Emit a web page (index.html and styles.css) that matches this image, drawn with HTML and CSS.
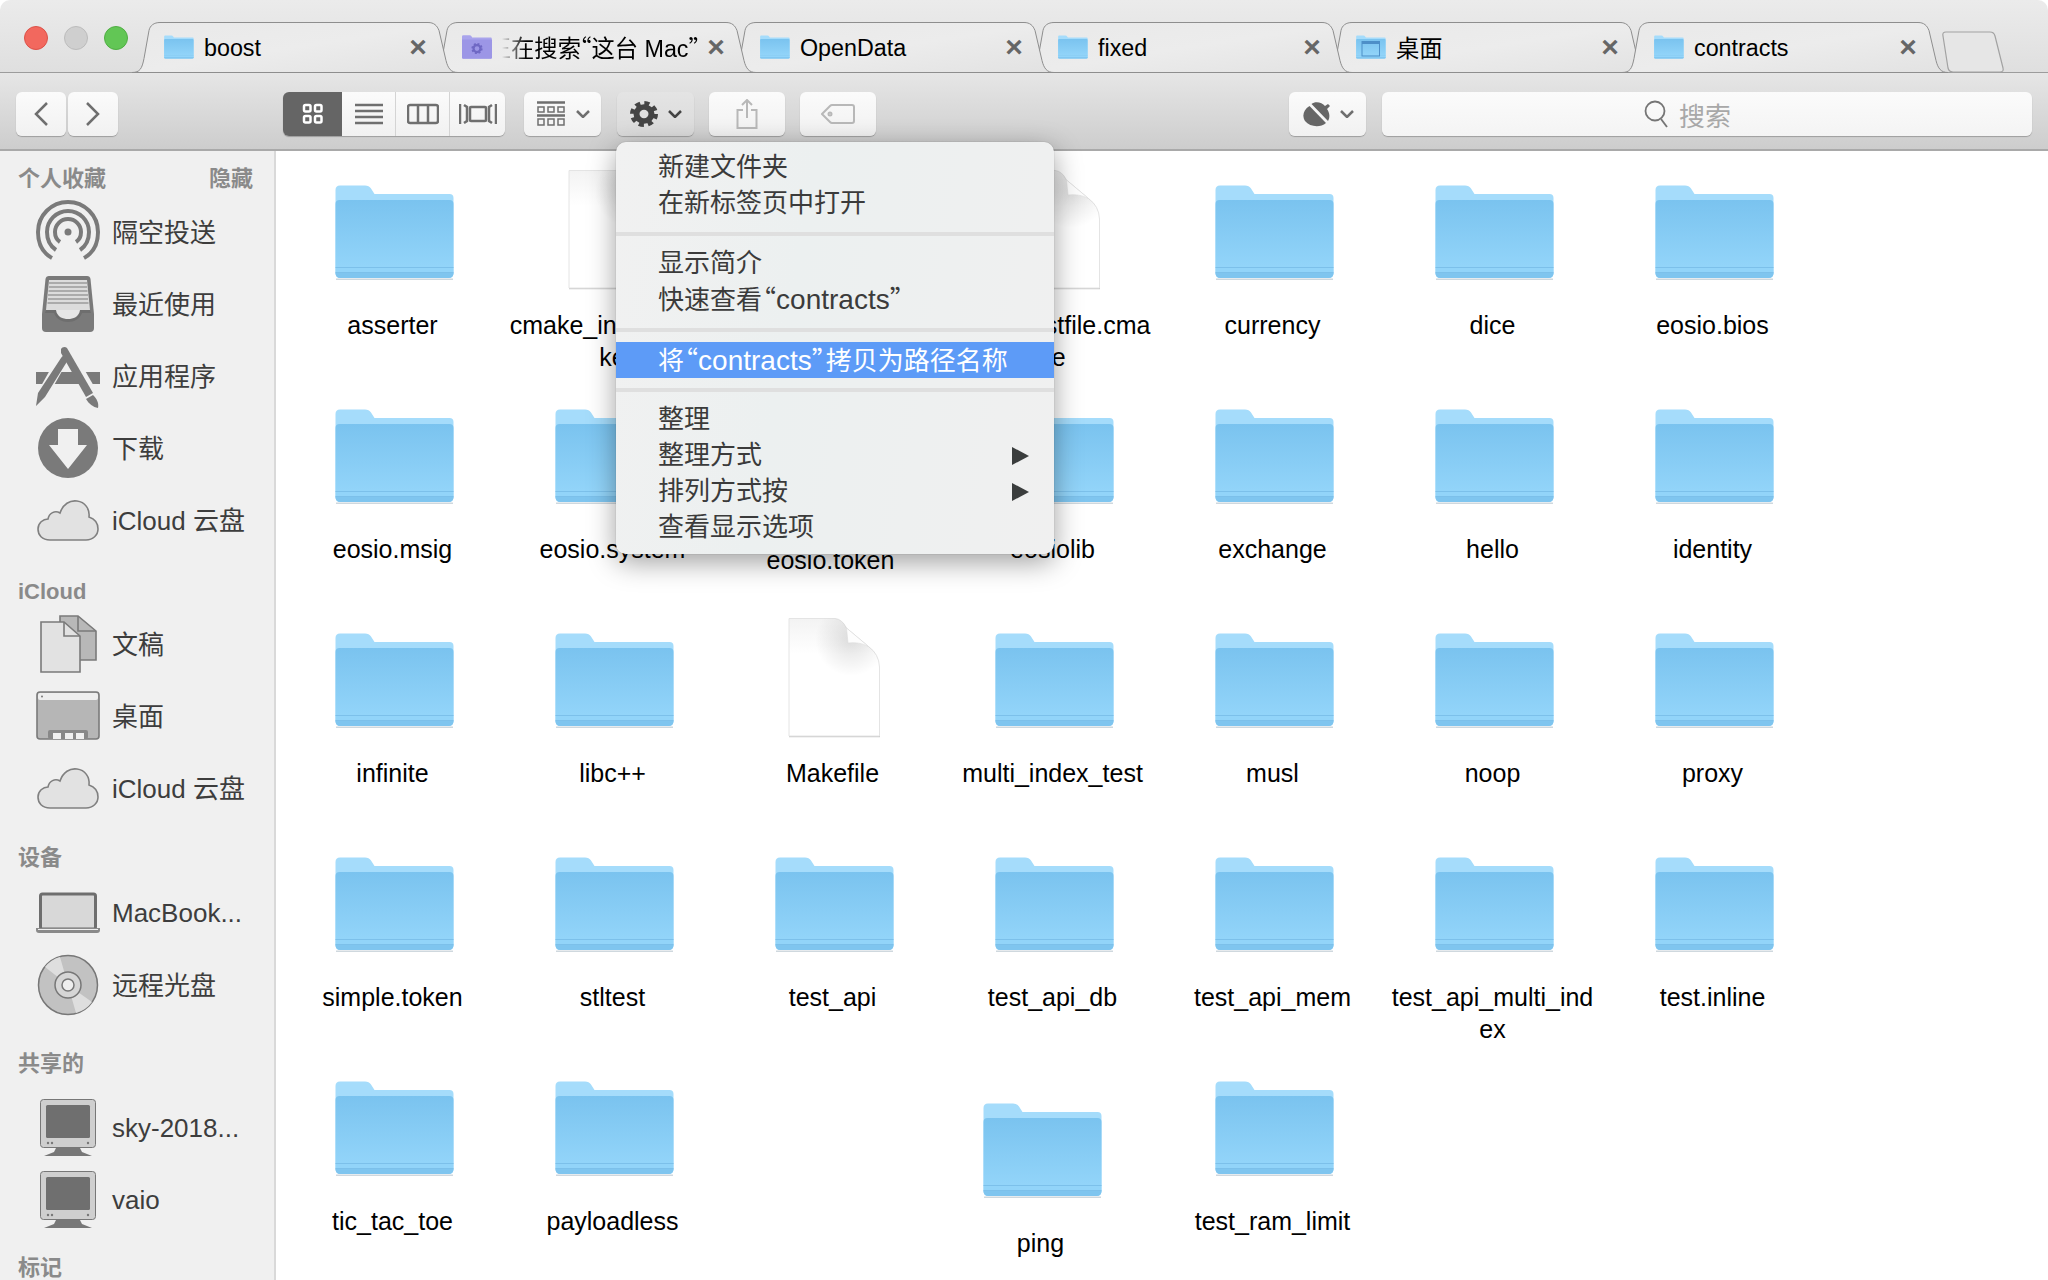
FILE: index.html
```html
<!DOCTYPE html>
<html lang="zh-CN">
<head>
    <meta charset="UTF-8">
    <meta name="viewport" content="width=device-width, initial-scale=1.0">
    <title>contracts</title>
    <link rel="stylesheet" href="styles.css">
</head>
<body>
    <svg class="defs" width="0" height="0">
        <defs>
            <linearGradient id="folderFront" x1="0" y1="0" x2="0" y2="1">
                <stop offset="0" stop-color="#7ac3ef"/>
                <stop offset="0.85" stop-color="#92d4f9"/>
            </linearGradient>
            <linearGradient id="tabFill" x1="0" y1="0" x2="1" y2="1">
                <stop offset="0" stop-color="#e9e9e9"/>
                <stop offset="0.5" stop-color="#ececec"/>
                <stop offset="1" stop-color="#e2e2e2"/>
            </linearGradient>
            <linearGradient id="fileTop" x1="0" y1="0" x2="0" y2="1">
                <stop offset="0" stop-color="#f3f3f3"/>
                <stop offset="0.3" stop-color="#ffffff"/>
            </linearGradient>
            <radialGradient id="fileCurl" gradientUnits="userSpaceOnUse" cx="82" cy="24" r="36">
                <stop offset="0" stop-color="#000" stop-opacity="0.12"/>
                <stop offset="1" stop-color="#000" stop-opacity="0"/>
            </radialGradient>
            <g id="folder">
                <path d="M7 110.500h117v1.500H7Z" fill="#cfd8de"/>
                <path d="M6.500 22q0-4.500 4.500-4.500h25q4 0 6 3l3.500 5.500h75q4 0 4 4v74q0 5-5 5H11.500q-5 0-5-5Z" fill="#a5dcfb"/>
                <path d="M6.500 36q0-4 4-4h110q4 0 4 4v69q0 5-5 5H11.500q-5 0-5-5Z" fill="url(#folderFront)"/>
                <path d="M6.500 99h118v1H6.500zM6.500 104h118v1H6.500z" fill="#7cc0ea"/>
                <path d="M6.500 105h118q0 5-5 5H11.500q-5 0-5-5Z" fill="#7fc5ef"/>
            </g>
            <g id="file">
                <path d="M20 120.500h91" stroke="#c9c9c9" stroke-width="1.500"/>
                <path d="M20 2.500H66q7 .5 11.500 9.500L99.500 30.500Q110 38 110.500 51V120H20Z" fill="url(#fileTop)" stroke="#e4e4e4"/>
                <path d="M20 2.500H66q7 .5 11.500 9.500L99.500 30.500Q110 38 110.500 51V120H20Z" fill="url(#fileCurl)"/>
                <path d="M77.500 12 79 27q11-1.500 20.500 3.500Z" fill="#fdfdfd" stroke="#dcdcdc" stroke-width=".6"/>
            </g>
            <g id="cloud">
                <path d="M14 52C6 52 2 47 2 41c0-6 5-10 10-10 1-6 7-9 12-6 3-9 10-13 17-12 8 1 13 8 12 16 6 2 9 7 9 12 0 6-5 11-12 11Z" fill="#e2e2e2" stroke="#808080" stroke-width="1.600"/>
            </g>
            <g id="monitor">
                <path d="M20 52h24l2 4 10 4H8l10-4Z" fill="#777"/>
                <rect x="4.500" y="3.500" width="55" height="48" rx="3" fill="#cfcfcf" stroke="#777"/>
                <rect x="10" y="9" width="44" height="33" rx="1.500" fill="#6f6f6f"/>
                <circle cx="12" cy="47" r="1.200" fill="#777"/><circle cx="16" cy="47" r="1.200" fill="#777"/><circle cx="52" cy="47" r="1.200" fill="#777"/>
            </g>
        </defs>
    </svg>

    <div class="window">
        <div class="tabbar">
            <svg class="tab-shapes" viewBox="0 0 2048 51" width="2048" height="51">
                <defs>
                    <path id="tabShape" d="M-20 50C-12 50-10 46-8 36L-3 8C-2 3 2 0 8 0H276C282 0 285 3 287 8L294 38C296 46 299 50 306 50Z" fill="url(#tabFill)" stroke="#8e8e8e"/>
                </defs>
                <use href="#tabShape" x="1344" y="0.500"/>
                <use href="#tabShape" x="1046" y="0.500"/>
                <use href="#tabShape" x="748" y="0.500"/>
                <use href="#tabShape" x="450" y="0.500"/>
                <use href="#tabShape" x="152" y="0.500"/>
                <use href="#tabShape" x="1642" y="0.500"/>
                <path d="M1943 14q-1-4 3-4h44q4 0 5 4l8 32q1 4-3 4h-47q-4 0-5-4Z" fill="#e6e6e6" stroke="#a2a2a2" stroke-width="1.200"/>
            </svg>
            <div class="lights">
                <span class="light light-red"></span>
                <span class="light light-grey"></span>
                <span class="light light-green"></span>
            </div>
            <div class="tab">
                <svg class="tab-icon" viewBox="6 16 120 96"><use href="#folder"/></svg>
                <span class="tab-label">boost</span>
                <span class="tab-close">×</span>
            </div>
            <div class="tab">
                <svg class="tab-icon" viewBox="6 16 120 96">
                    <path d="M6 22q0-5 5-5h26q4 0 6 3l4 6h74q4 0 4 4v75q0 5-5 5H11q-5 0-5-5Z" fill="#a9a4ec"/>
                    <path d="M6 34h120v72q0 5-5 5H11q-5 0-5-5Z" fill="#9c96e6"/>
                    <circle cx="66" cy="70" r="17" fill="none" stroke="#6f68c4" stroke-width="11" stroke-dasharray="7 6.300"/>
                    <circle cx="66" cy="70" r="14" fill="none" stroke="#6f68c4" stroke-width="9"/>
                </svg>
                <span class="tab-label tab-label-cjk tab-label-fade"><span>正在搜索<span class="quote quote-open">“</span>这台 Mac<span class="quote quote-close">”</span></span></span>
                <span class="tab-close">×</span>
            </div>
            <div class="tab">
                <svg class="tab-icon" viewBox="6 16 120 96"><use href="#folder"/></svg>
                <span class="tab-label">OpenData</span>
                <span class="tab-close">×</span>
            </div>
            <div class="tab">
                <svg class="tab-icon" viewBox="6 16 120 96"><use href="#folder"/></svg>
                <span class="tab-label">fixed</span>
                <span class="tab-close">×</span>
            </div>
            <div class="tab">
                <svg class="tab-icon" viewBox="6 16 120 96">
                    <use href="#folder"/>
                    <rect x="30" y="42" width="70" height="58" fill="none" stroke="#4d8fc8" stroke-width="4"/>
                    <rect x="30" y="42" width="70" height="10" fill="#4d8fc8"/>
                </svg>
                <span class="tab-label tab-label-cjk">桌面</span>
                <span class="tab-close">×</span>
            </div>
            <div class="tab">
                <svg class="tab-icon" viewBox="6 16 120 96"><use href="#folder"/></svg>
                <span class="tab-label">contracts</span>
                <span class="tab-close">×</span>
            </div>
        </div>

        <div class="toolbar">
            <div class="btn btn-nav">
                <svg width="16" height="24" viewBox="0 0 16 24"><path d="M14 1 3 12l11 11" class="ico"/></svg>
            </div>
            <div class="btn btn-nav btn-next">
                <svg width="16" height="24" viewBox="0 0 16 24"><path d="m2 1 11 11L2 23" class="ico"/></svg>
            </div>

            <div class="views">
                <div class="view view-grid">
                    <svg width="22" height="22" viewBox="0 0 22 22">
                        <rect x="2" y="2" width="6.500" height="6.500" rx="1.500" class="ico ico-white"/>
                        <rect x="13" y="2" width="6.500" height="6.500" rx="1.500" class="ico ico-white"/>
                        <rect x="2" y="13" width="6.500" height="6.500" rx="1.500" class="ico ico-white"/>
                        <rect x="13" y="13" width="6.500" height="6.500" rx="1.500" class="ico ico-white"/>
                    </svg>
                </div>
                <div class="view view-list">
                    <svg width="28" height="22" viewBox="0 0 28 22"><path d="M0 2h28M0 8h28M0 14h28M0 20h28" class="ico"/></svg>
                </div>
                <div class="view view-cols">
                    <svg width="32" height="22" viewBox="0 0 32 22"><rect x="1" y="2" width="30" height="18" rx="2" class="ico"/><path d="M11 2v18M21 2v18" class="ico"/></svg>
                </div>
                <div class="view view-flow">
                    <svg width="38" height="24" viewBox="0 0 38 24"><rect x="11" y="5" width="16" height="14" rx="1" class="ico"/><path d="M1 2v20M5 3l3 2v14l-3 2M37 2v20M33 3l-3 2v14l3 2" class="ico"/></svg>
                </div>
            </div>

            <div class="btn btn-drop btn-arrange">
                <svg width="30" height="26" viewBox="0 0 30 26">
                    <path d="M1 1.500h28M1 14.500h28" class="ico"/>
                    <path d="M2 6h6v5H2zM12 6h6v5h-6zM22 6h6v5h-6zM2 18h6v6H2zM12 18h6v6h-6zM22 18h6v6h-6z" class="ico ico-thin"/>
                </svg>
                <svg width="14" height="8" viewBox="0 0 14 8"><path d="m1 1 6 6 6-6" class="ico"/></svg>
            </div>
            <div class="btn btn-drop btn-pressed">
                <svg width="28" height="26" viewBox="0 0 28 28" preserveAspectRatio="none">
                    <circle cx="14" cy="14" r="11.500" fill="none" stroke="#444" stroke-width="5" stroke-dasharray="5 4.030"/>
                    <circle cx="14" cy="14" r="7.500" fill="none" stroke="#444" stroke-width="6"/>
                </svg>
                <svg width="14" height="8" viewBox="0 0 14 8"><path d="m1 1 6 6 6-6" class="ico ico-dark"/></svg>
            </div>
            <div class="btn btn-wide">
                <svg width="22" height="30" viewBox="0 0 22 30"><path d="M7 11H1.500v18h19V11H15M11 19V1.500M6 6l5-5 5 5" class="ico ico-faint"/></svg>
            </div>
            <div class="btn btn-wide">
                <svg width="34" height="20" viewBox="0 0 34 20"><path d="M1 10 9 2q1-1 2-1h20q2 0 2 2v14q0 2-2 2H11q-1 0-2-1Z" class="ico ico-faint"/><circle cx="9" cy="10" r="1.500" class="ico ico-faint"/></svg>
            </div>

            <div class="btn btn-drop btn-acorn">
                <svg width="30" height="26" viewBox="0 0 30 26">
                    <path d="M9.500 3C13 0 20 1 23 5l3-2 2 2-3 3c3 4 3 9 1 12Z" fill="#666"/>
                    <path d="M7.500 5 24 22c-6 5-16 4-21-2C0 15 1 9 7.500 5Z" fill="#666"/>
                </svg>
                <svg width="14" height="8" viewBox="0 0 14 8"><path d="m1 1 6 6 6-6" class="ico"/></svg>
            </div>
            <div class="search">
                <svg width="26" height="28" viewBox="0 0 26 28"><circle cx="12" cy="11" r="9.500" class="ico ico-search"/><path d="m18 19 6 8" class="ico ico-search"/></svg>
                <span>搜索</span>
            </div>
        </div>

        <div class="content">
            <div class="sidebar">
                <div class="side-head side-head-first"><span>个人收藏</span><span>隐藏</span></div>
                <div class="side-items side-items-fav">
                    <div class="side-item">
                        <svg class="side-icon" viewBox="0 0 64 64">
                            <g fill="none" stroke="#7a7a7a" stroke-width="4">
                                <path d="M16 58C5 52 2 42 2 32a30 30 0 0 1 60 0c0 10-3 20-14 26"/>
                                <path d="M20 50c-6-4-9-11-9-18a21 21 0 0 1 42 0c0 7-3 14-9 18"/>
                                <path d="M24 42c-3-2-5-6-5-10a13 13 0 0 1 26 0c0 4-2 8-5 10"/>
                            </g>
                            <circle cx="32" cy="32" r="3.500" fill="#7a7a7a"/>
                        </svg>
                        <span class="side-name">隔空投送</span>
                    </div>
                    <div class="side-item">
                        <svg class="side-icon" viewBox="0 0 64 64">
                            <path d="M13 4h38q3 0 3.500 3L58 42v14q0 4-4 4H10q-4 0-4-4V42L9.500 7Q10 4 13 4Z" fill="#7a7a7a"/>
                            <path d="M13 8h38l3 30H10Z" fill="#dcdcdc"/>
                            <path d="M13 11h38M13 15h38M12.500 19h39M12 23h40M12 27h40M11.500 31h41" stroke="#9a9a9a" stroke-width="1.500"/>
                            <path d="M10 38h10c1 7 7 9 12 9s11-2 12-9h10l1 3H46c-2 6-8 9-14 9s-12-3-14-9H9Z" fill="#6e6e6e"/>
                            <path d="M20 38h24c-1 7-7 9-12 9s-11-2-12-9Z" fill="#e6e6e6"/>
                        </svg>
                        <span class="side-name">最近使用</span>
                    </div>
                    <div class="side-item">
                        <svg class="side-icon" viewBox="0 0 64 64">
                            <rect x="0" y="28" width="64" height="12" fill="#7a7a7a"/>
                            <path d="M27 14 4 55" stroke="#f0f0f0" stroke-width="11"/>
                            <path d="M29 3 59 55" stroke="#f0f0f0" stroke-width="11"/>
                            <path d="M25 14c1-2 3-3 5-3 2 1 3 3 2 5L9 53l-9 9 2-13Z" fill="#7a7a7a"/>
                            <path d="M25 5c1-2 4-3 6-1l26 45-7 4L25 9Z" fill="#7a7a7a"/>
                            <path d="M50 55l7-4c4 4 6 8 5 13-5-1-9-4-12-9Z" fill="#7a7a7a"/>
                        </svg>
                        <span class="side-name">应用程序</span>
                    </div>
                    <div class="side-item">
                        <svg class="side-icon" viewBox="0 0 64 64">
                            <circle cx="32" cy="32" r="30" fill="#7a7a7a"/>
                            <path d="M22 13h20v16h9L32 53 13 29h9Z" fill="#f0f0f0"/>
                        </svg>
                        <span class="side-name">下载</span>
                    </div>
                    <div class="side-item">
                        <svg class="side-icon" viewBox="0 0 64 64"><use href="#cloud"/></svg>
                        <span class="side-name">iCloud 云盘</span>
                    </div>
                </div>

                <div class="side-head side-head-icloud"><span>iCloud</span></div>
                <div class="side-items side-items-icloud">
                    <div class="side-item">
                        <svg class="side-icon" viewBox="0 0 64 64">
                            <path d="M24 4h18l18 15v29H24Z" fill="#b8b8b8" stroke="#7a7a7a" stroke-width="1.600"/>
                            <path d="M5 10h23l16 14v36H5Z" fill="#e2e2e2" stroke="#7a7a7a" stroke-width="1.600"/>
                            <path d="M28 10v14h16" fill="none" stroke="#7a7a7a" stroke-width="1.600"/>
                            <path d="M42 4v15h18" fill="none" stroke="#7a7a7a" stroke-width="1.600"/>
                        </svg>
                        <span class="side-name">文稿</span>
                    </div>
                    <div class="side-item">
                        <svg class="side-icon" viewBox="0 0 64 64">
                            <rect x="1" y="8" width="62" height="47" rx="3" fill="#b6b6b6" stroke="#7a7a7a" stroke-width="1.600"/>
                            <rect x="2" y="9" width="60" height="7" rx="2" fill="#eeeeee"/>
                            <circle cx="6" cy="12.500" r="1" fill="#777"/>
                            <rect x="12" y="46" width="40" height="9" rx="2" fill="#888"/>
                            <path d="M17 49h8v6h-8zM29 49h8v6h-8zM40 49h8v6h-8z" fill="#f0f0f0"/>
                        </svg>
                        <span class="side-name">桌面</span>
                    </div>
                    <div class="side-item">
                        <svg class="side-icon" viewBox="0 0 64 64"><use href="#cloud"/></svg>
                        <span class="side-name">iCloud 云盘</span>
                    </div>
                </div>

                <div class="side-head side-head-dev"><span>设备</span></div>
                <div class="side-items side-items-dev">
                    <div class="side-item">
                        <svg class="side-icon" viewBox="0 0 64 64">
                            <rect x="4.500" y="13" width="55" height="35" rx="2" fill="#d8d8d8" stroke="#6e6e6e" stroke-width="3"/>
                            <path d="M0 47h64v2q0 3-3 3H3q-3 0-3-3Z" fill="#8a8a8a"/>
                            <path d="M2 48h60v1H2Z" fill="#eee"/>
                        </svg>
                        <span>MacBook...</span>
                    </div>
                    <div class="side-item">
                        <svg class="side-icon" viewBox="0 0 64 64">
                            <circle cx="32" cy="32" r="29.500" fill="#c2c2c2" stroke="#777" stroke-width="1.500"/>
                            <path d="M32 32 9 14a29 29 0 0 1 15-10ZM32 32l24 17a29 29 0 0 1-16 11Z" fill="#dedede"/>
                            <circle cx="32" cy="32" r="13" fill="#d6d6d6" stroke="#777" stroke-width="1.500"/>
                            <circle cx="32" cy="32" r="6" fill="#eeeeee" stroke="#777" stroke-width="1.500"/>
                        </svg>
                        <span class="side-name">远程光盘</span>
                    </div>
                </div>

                <div class="side-head side-head-share"><span>共享的</span></div>
                <div class="side-items side-items-share">
                    <div class="side-item">
                        <svg class="side-icon" viewBox="0 0 64 64"><use href="#monitor"/></svg>
                        <span>sky-2018...</span>
                    </div>
                    <div class="side-item">
                        <svg class="side-icon" viewBox="0 0 64 64"><use href="#monitor"/></svg>
                        <span>vaio</span>
                    </div>
                </div>

                <div class="side-head side-head-tags"><span>标记</span></div>
            </div>

            <div class="files">
                <div class="item"><svg class="item-icon" viewBox="0 0 128 128"><use href="#folder"/></svg><div class="item-name">asserter</div></div>
                <div class="item"><svg class="item-icon" viewBox="0 0 128 128"><use href="#file"/></svg><div class="item-name">cmake_install.cmake</div></div>
                <div class="item"><svg class="item-icon" viewBox="0 0 128 128"><use href="#file"/></svg><div class="item-name">CMakeLists.txt</div></div>
                <div class="item"><svg class="item-icon" viewBox="0 0 128 128"><use href="#file"/></svg><div class="item-name">CTestTestfile.cmake</div></div>
                <div class="item"><svg class="item-icon" viewBox="0 0 128 128"><use href="#folder"/></svg><div class="item-name">currency</div></div>
                <div class="item"><svg class="item-icon" viewBox="0 0 128 128"><use href="#folder"/></svg><div class="item-name">dice</div></div>
                <div class="item"><svg class="item-icon" viewBox="0 0 128 128"><use href="#folder"/></svg><div class="item-name">eosio.bios</div></div>

                <div class="item"><svg class="item-icon" viewBox="0 0 128 128"><use href="#folder"/></svg><div class="item-name">eosio.msig</div></div>
                <div class="item"><svg class="item-icon" viewBox="0 0 128 128"><use href="#folder"/></svg><div class="item-name">eosio.system</div></div>
                <div class="item item-token"><svg class="item-icon" viewBox="0 0 128 128"><use href="#folder"/></svg><div class="item-name">eosio.token</div></div>
                <div class="item"><svg class="item-icon" viewBox="0 0 128 128"><use href="#folder"/></svg><div class="item-name">eosiolib</div></div>
                <div class="item"><svg class="item-icon" viewBox="0 0 128 128"><use href="#folder"/></svg><div class="item-name">exchange</div></div>
                <div class="item"><svg class="item-icon" viewBox="0 0 128 128"><use href="#folder"/></svg><div class="item-name">hello</div></div>
                <div class="item"><svg class="item-icon" viewBox="0 0 128 128"><use href="#folder"/></svg><div class="item-name">identity</div></div>

                <div class="item"><svg class="item-icon" viewBox="0 0 128 128"><use href="#folder"/></svg><div class="item-name">infinite</div></div>
                <div class="item"><svg class="item-icon" viewBox="0 0 128 128"><use href="#folder"/></svg><div class="item-name">libc++</div></div>
                <div class="item"><svg class="item-icon" viewBox="0 0 128 128"><use href="#file"/></svg><div class="item-name">Makefile</div></div>
                <div class="item"><svg class="item-icon" viewBox="0 0 128 128"><use href="#folder"/></svg><div class="item-name">multi_index_test</div></div>
                <div class="item"><svg class="item-icon" viewBox="0 0 128 128"><use href="#folder"/></svg><div class="item-name">musl</div></div>
                <div class="item"><svg class="item-icon" viewBox="0 0 128 128"><use href="#folder"/></svg><div class="item-name">noop</div></div>
                <div class="item"><svg class="item-icon" viewBox="0 0 128 128"><use href="#folder"/></svg><div class="item-name">proxy</div></div>

                <div class="item"><svg class="item-icon" viewBox="0 0 128 128"><use href="#folder"/></svg><div class="item-name">simple.token</div></div>
                <div class="item"><svg class="item-icon" viewBox="0 0 128 128"><use href="#folder"/></svg><div class="item-name">stltest</div></div>
                <div class="item"><svg class="item-icon" viewBox="0 0 128 128"><use href="#folder"/></svg><div class="item-name">test_api</div></div>
                <div class="item"><svg class="item-icon" viewBox="0 0 128 128"><use href="#folder"/></svg><div class="item-name">test_api_db</div></div>
                <div class="item"><svg class="item-icon" viewBox="0 0 128 128"><use href="#folder"/></svg><div class="item-name">test_api_mem</div></div>
                <div class="item"><svg class="item-icon" viewBox="0 0 128 128"><use href="#folder"/></svg><div class="item-name">test_api_multi_index</div></div>
                <div class="item"><svg class="item-icon" viewBox="0 0 128 128"><use href="#folder"/></svg><div class="item-name">test.inline</div></div>

                <div class="item"><svg class="item-icon" viewBox="0 0 128 128"><use href="#folder"/></svg><div class="item-name">tic_tac_toe</div></div>
                <div class="item"><svg class="item-icon" viewBox="0 0 128 128"><use href="#folder"/></svg><div class="item-name">payloadless</div></div>
                <div class="item"></div>
                <div class="item item-ping"><svg class="item-icon" viewBox="0 0 128 128"><use href="#folder"/></svg><div class="item-name">ping</div></div>
                <div class="item"><svg class="item-icon" viewBox="0 0 128 128"><use href="#folder"/></svg><div class="item-name">test_ram_limit</div></div>
            </div>
        </div>

        <div class="menu">
            <div class="menu-row">新建文件夹</div>
            <div class="menu-row">在新标签页中打开</div>
            <div class="menu-sep"></div>
            <div class="menu-row">显示简介</div>
            <div class="menu-row menu-row-mixed">快速查看<span class="quote quote-open">“</span><span class="menu-latin">contracts</span><span class="quote quote-close">”</span></div>
            <div class="menu-sep menu-sep-hl"></div>
            <div class="menu-row menu-row-mixed menu-row-active">将<span class="quote quote-open">“</span><span class="menu-latin">contracts</span><span class="quote quote-close">”</span>拷贝为路径名称</div>
            <div class="menu-sep menu-sep-after"></div>
            <div class="menu-row">整理</div>
            <div class="menu-row menu-row-sub">整理方式</div>
            <div class="menu-row menu-row-sub">排列方式按</div>
            <div class="menu-row">查看显示选项</div>
        </div>
    </div>
</body>
</html>
```

FILE: styles.css
```css
body {
    margin: 0;
    background: #fff;
    font-family: "Liberation Sans", "Noto Sans CJK SC", sans-serif;
    color: #000;
}

.defs {
    position: absolute;
}

.window {
    position: relative;
    width: 2048px;
    height: 1280px;
    overflow: hidden;
    border-radius: 10px 10px 0 0;
    background: #fff;
}

/* tab bar */
.tabbar {
    position: relative;
    display: flex;
    height: 72px;
    padding-left: 144px;
    box-sizing: border-box;
    background: linear-gradient(#ebebeb, #dfdfdf);
}

.tab-shapes {
    position: absolute;
    left: 0;
    top: 22px;
}

.lights {
    position: absolute;
    left: 24px;
    top: 26px;
    display: flex;
    gap: 16px;
}

.light {
    width: 24px;
    height: 24px;
    border-radius: 50%;
    box-sizing: border-box;
}

.light-red {
    background: #f2685e;
    border: 1px solid #dc5148;
}

.light-grey {
    background: #cfcfcf;
    border: 1px solid #bcbcbc;
}

.light-green {
    background: #62c655;
    border: 1px solid #4fae43;
}

.tab {
    position: relative;
    display: flex;
    align-items: center;
    width: 298px;
    height: 50px;
    margin-top: 22px;
    padding: 0 15px 0 20px;
    box-sizing: border-box;
    font-size: 23.300px;
}

.tab-icon {
    flex: none;
    width: 30px;
    height: 24px;
    margin-right: 10px;
}

.tab-label {
    flex: 1;
    min-width: 0;
    padding-top: 2px;
    white-space: nowrap;
    overflow: hidden;
}

.tab-label-cjk {
    padding-top: 0;
}

.tab-label-fade {
    display: flex;
    justify-content: flex-end;
    margin-right: 8px;
    -webkit-mask-image: linear-gradient(90deg, transparent, #000 24px);
    mask-image: linear-gradient(90deg, transparent, #000 24px);
}

.tab-label-fade span {
    flex: none;
}

.tab-close {
    flex: none;
    width: 18px;
    text-align: center;
    font-size: 30px;
    line-height: 30px;
    font-weight: bold;
    color: #666;
}

/* the CJK font's quotes are a full em wide, pulled in to sit tight on the text */
.quote {
    font-family: "Noto Sans CJK SC", sans-serif;
}

.quote-open {
    margin-left: -0.46em;
}

.quote-close {
    margin-right: -0.46em;
}

.tab-label .quote-open {
    margin-left: -0.55em;
}

.tab-label .quote-close {
    margin-right: -0.55em;
}

/* toolbar */
.toolbar {
    display: flex;
    align-items: center;
    height: 79px;
    padding: 0 16px 0 16px;
    box-sizing: border-box;
    background: linear-gradient(#e6e6e6, #cdcdcd);
    border-top: 1px solid #9c9c9c;
    border-bottom: 2px solid #a9a9a9;
}

.btn {
    display: flex;
    align-items: center;
    justify-content: center;
    gap: 10px;
    height: 44px;
    margin-top: 6px;
    border-radius: 6px;
    box-sizing: border-box;
    background: linear-gradient(#fbfbfb, #f1f1f1);
    box-shadow: 0 1px 1px rgba(0, 0, 0, 0.25);
}

.btn-nav {
    width: 50px;
}

.btn-next {
    margin-left: 2px;
}

.btn-drop {
    width: 77px;
}

.btn-wide {
    width: 76px;
    margin-left: 15px;
}

.btn-arrange {
    margin-left: 19px;
    margin-right: 16px;
}

.btn-pressed {
    background: linear-gradient(#e4e4e4, #dadada);
}

.btn-acorn {
    margin-left: auto;
    gap: 8px;
}

.ico {
    fill: none;
    stroke: #6f6f6f;
    stroke-width: 2.500;
}

.ico-white {
    stroke: #fff;
}

.ico-dark {
    stroke: #444;
}

.ico-thin {
    stroke-width: 1.500;
}

.ico-faint {
    stroke: #b8b8b8;
    stroke-width: 2;
}

.ico-search {
    stroke: #757575;
    stroke-width: 1.800;
}

.views {
    display: flex;
    height: 44px;
    margin: 6px 0 0 165px;
    border-radius: 6px;
    overflow: hidden;
    box-shadow: 0 1px 1px rgba(0, 0, 0, 0.25);
}

.view {
    display: flex;
    align-items: center;
    justify-content: center;
    background: linear-gradient(#fbfbfb, #f1f1f1);
    border-left: 1px solid #d4d4d4;
    box-sizing: border-box;
}

.view-grid {
    width: 59px;
    border-left: none;
    background: #656565;
}

.view-list {
    width: 53px;
    border-left: none;
}

.view-cols {
    width: 54px;
}

.view-flow {
    width: 56px;
}

.search {
    display: flex;
    align-items: center;
    justify-content: center;
    gap: 10px;
    width: 650px;
    height: 44px;
    margin: 6px 0 0 16px;
    padding-right: 40px;
    box-sizing: border-box;
    border-radius: 6px;
    background: linear-gradient(#fbfbfb, #f4f4f4);
    box-shadow: 0 1px 1px rgba(0, 0, 0, 0.25);
    font-size: 26px;
    color: #a8a8a8;
}

/* sidebar + files */
.content {
    display: flex;
    height: 1129px;
}

.sidebar {
    flex: none;
    width: 276px;
    box-sizing: border-box;
    background: #f0f0f0;
    border-right: 2px solid #d9d9d9;
    overflow: hidden;
}

.side-head {
    display: flex;
    justify-content: space-between;
    height: 28px;
    padding: 0 21px 0 18px;
    font-size: 22px;
    line-height: 28px;
    font-weight: bold;
    color: #8a8a8a;
}

.side-head-first {
    margin-top: 14px;
}

.side-head-icloud {
    margin-top: 22px;
}

.side-head-dev {
    margin-top: 20px;
}

.side-head-share {
    margin-top: 29px;
}

.side-head-tags {
    margin-top: 18px;
}

.side-items-fav {
    margin-top: 3px;
}

.side-items-icloud {
    margin-top: 2px;
}

.side-items-dev {
    margin-top: 5px;
}

.side-items-share {
    margin-top: 14px;
}

.side-item {
    display: flex;
    align-items: center;
    height: 72px;
    padding-left: 36px;
    font-size: 26px;
    color: #3d3d3d;
    white-space: nowrap;
}

.side-icon {
    flex: none;
    width: 64px;
    height: 64px;
    margin-right: 12px;
}

.side-name {
    margin-top: -3px;
}

.files {
    flex: 1;
    display: grid;
    grid-template-columns: repeat(7, 220px);
    grid-auto-rows: 224px;
    padding: 17px 0 0 6.500px;
}

.item {
    display: flex;
    flex-direction: column;
    align-items: center;
}

.item-token {
    transform: translate(-2px, 11px);
}

.item-ping {
    transform: translate(-12px, 22px);
}

.item-icon {
    width: 128px;
    height: 128px;
}

.item-name {
    width: 206px;
    margin-top: 13px;
    font-size: 25px;
    line-height: 32px;
    text-align: center;
    word-break: break-all;
}

/* gear menu */
.menu {
    position: absolute;
    left: 616px;
    top: 142px;
    width: 438px;
    height: 412px;
    padding-top: 7px;
    box-sizing: border-box;
    border-radius: 10px;
    background: linear-gradient(100deg, #f1f1f1, #ecf0f0 40%, #f0f0f0);
    box-shadow: 0 8px 28px rgba(0, 0, 0, 0.38), 0 0 1px rgba(0, 0, 0, 0.4);
    color: #3b3b3b;
    font-size: 26px;
}

.menu-row {
    position: relative;
    height: 36px;
    padding-left: 42px;
    line-height: 36px;
    white-space: nowrap;
}

.menu-row-mixed {
    line-height: 33px;
}

.menu-latin {
    font-size: 28px;
}

.menu-row-active {
    background: #5d9bf7;
    color: #fff;
}

.menu-row-sub::after {
    content: "";
    position: absolute;
    right: 25px;
    top: 10px;
    border-left: 17px solid #3a3d3d;
    border-top: 9.500px solid transparent;
    border-bottom: 9.500px solid transparent;
}

.menu-sep {
    height: 4px;
    margin: 11px 0 9px;
    background: #dfdfdf;
}

.menu-sep-hl {
    margin-bottom: 10px;
}

.menu-sep-after {
    margin: 10px 0 9px;
}
```
